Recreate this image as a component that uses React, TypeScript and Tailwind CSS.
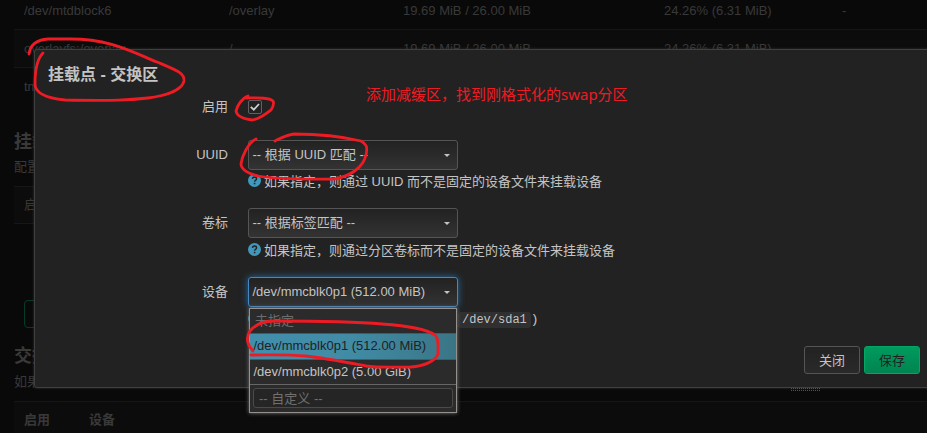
import type { ReactNode } from 'react';

function UsageRow({ cells, alt }: { cells: string[]; alt?: boolean }) {
  return (
    <div
      className={
        'grid h-[38px] shrink-0 grid-cols-[205px_174px_261px_178px_80px] items-center border-b border-[#161616] pl-[10px] whitespace-nowrap ' +
        (alt ? 'bg-[#0c0c0c]' : '')
      }
    >
      {cells.map((c, i) => (
        <span key={i}>{c}</span>
      ))}
    </div>
  );
}

function Background() {
  return (
    <div className="flex h-full flex-col pl-[14px] text-[#393939]">
      <div className="-mt-[8px] flex shrink-0 flex-col">
        <UsageRow cells={['/dev/mtdblock6', '/overlay', '19.69 MiB / 26.00 MiB', '24.26% (6.31 MiB)', '-']} />
        <UsageRow alt cells={['overlayfs:/overlay', '/', '19.69 MiB / 26.00 MiB', '24.26% (6.31 MiB)', '-']} />
        <div className="flex h-[38px] items-center pl-[10px]">tmpfs</div>
      </div>
      <h3 className="mt-[22px] h-[28px] shrink-0 text-[18px] leading-[28px] font-bold">挂载点</h3>
      <p className="mt-[1px] h-[20px] shrink-0 leading-[20px]">配置存储设备</p>
      <div className="mt-[9px] flex h-[38px] shrink-0 items-center border-y border-[#161616] bg-[#0c0c0c] pl-[10px]">启用</div>
      <div className="mt-[76px] ml-[10px] h-[28px] w-[60px] shrink-0 rounded-[4px] border border-[#033d2a]" />
      <h3 className="mt-[14px] h-[28px] shrink-0 text-[18px] leading-[28px] font-bold">交换区</h3>
      <p className="mt-[2px] h-[20px] shrink-0 leading-[20px]">如果物理</p>
      <div className="mt-[9px] flex h-[36px] shrink-0 items-center gap-[39px] border-t border-[#161616] bg-[#0c0c0c] pl-[10px] font-bold">
        <span>启用</span>
        <span>设备</span>
      </div>
    </div>
  );
}

function Select({ children, focused }: { children: ReactNode; focused?: boolean }) {
  return (
    <div
      className={
        'flex h-[30px] w-[210px] items-center justify-between rounded-[3px] border bg-gradient-to-b from-[#222] to-[#333] pr-[7px] pl-[3.5px] whitespace-nowrap ' +
        (focused ? 'border-[#4388c4] shadow-[0_0_7px_#286ca3]' : 'border-[#555]')
      }
    >
      <span>{children}</span>
      <span className="h-0 w-0 border-x-[3px] border-t-[3px] border-x-transparent border-t-[#c4c4c4]" />
    </div>
  );
}

function HelpIcon() {
  return (
    <svg width="13" height="13" viewBox="0 0 13 13" className="mt-[-4px] shrink-0">
      <circle cx="6.5" cy="6.5" r="6.5" fill="#4099bd" />
      <path d="M4.5 4.9 Q4.6 3.1 6.5 3.1 Q8.5 3.1 8.5 4.8 Q8.5 5.7 7.5 6.3 Q6.6 6.8 6.6 7.8" fill="none" stroke="#222" strokeWidth="1.5" />
      <rect x="5.8" y="8.8" width="1.6" height="1.5" fill="#222" />
    </svg>
  );
}

function Field({ label, children, className }: { label: string; children: ReactNode; className: string }) {
  return (
    <div className={'flex shrink-0 gap-[20px] ' + className}>
      <label className="h-[30px] w-[193px] shrink-0 text-right leading-[29px]">{label}</label>
      <div className="flex flex-col">{children}</div>
    </div>
  );
}

function Hint({ children }: { children: ReactNode }) {
  return (
    <div className="mt-[2px] flex h-[20px] items-center gap-[3px] whitespace-nowrap">
      <HelpIcon />
      <span className="leading-[20px]">{children}</span>
    </div>
  );
}

function Menu() {
  return (
    <div className="absolute top-[308px] left-[249px] flex h-[105px] w-[208px] flex-col border border-[#96918c] bg-[#2b2b2b] whitespace-nowrap text-[#c4c4c4] shadow-[0_0_4px_#777]">
      <div className="h-[25px] border-b border-[#555] pl-[5px] leading-[23px] text-[#6d6d6d]">未指定</div>
      <div className="h-[26px] border-b border-[#555] bg-gradient-to-r from-[#418fac] via-[#418ba5] to-[#3a7585] pl-[3.5px] leading-[24px] text-[#222]">
        /dev/mmcblk0p1 (512.00 MiB)
      </div>
      <div className="h-[25px] border-b border-[#666] pl-[3.5px] leading-[24px]">/dev/mmcblk0p2 (5.00 GiB)</div>
      <div className="mx-[3px] mt-[3px] h-[20px] rounded-[3px] border border-[#4a4a4a] bg-[#252525] pl-[5px] leading-[19px] text-[#707070]">-- 自定义 --</div>
    </div>
  );
}

function Modal() {
  return (
    <div className="absolute top-[49px] left-[34px] flex h-[339px] w-[900px] flex-col rounded-[3px] border border-[#404040] bg-[#222] text-[#c4c4c4] shadow-[0_0_3px_#333]">
      <h4 className="mt-[13px] ml-[13px] h-[24px] shrink-0 text-[16px] leading-[24px] font-bold">挂载点 - 交换区</h4>
      <Field label="启用" className="mt-[5px] h-[48px]">
        <div className="mt-[8px] flex h-[14px] w-[14px] items-center justify-center rounded-[2px] border border-[#606060]">
          <svg width="10" height="8" viewBox="0 0 10 8">
            <path d="M.8 3.8 3.8 6.7 9 1" fill="none" stroke="#d0d0d0" strokeWidth="1.8" />
          </svg>
        </div>
      </Field>
      <Field label="UUID" className="h-[68px]">
        <Select>-- 根据 UUID 匹配 --</Select>
        <Hint>如果指定，则通过 UUID 而不是固定的设备文件来挂载设备</Hint>
      </Field>
      <Field label="卷标" className="h-[69px]">
        <Select>-- 根据标签匹配 --</Select>
        <div className="mt-px">
          <Hint>如果指定，则通过分区卷标而不是固定的设备文件来挂载设备</Hint>
        </div>
      </Field>
      <Field label="设备" className="h-[69px]">
        <Select focused>/dev/mmcblk0p1 (512.00 MiB)</Select>
        <div className="mt-[3px] flex h-[20px] items-center whitespace-nowrap">
          <HelpIcon />
          <span className="w-[197px] pt-[6px] text-right">.</span>
          <code className="h-[16px] rounded-[3px] bg-[#303030] px-[4px] font-['Liberation_Mono'] text-[12px] leading-[17px]">/dev/sda1</code>
          <span className="font-['Liberation_Mono']">)</span>
        </div>
      </Field>
      <div className="mr-[13px] flex justify-end gap-[4px]">
        <button className="h-[28px] w-[56px] rounded-[3px] border border-[#555] bg-gradient-to-b from-[#222] to-[#2a2a2a] leading-[25px]">关闭</button>
        <button className="h-[28px] w-[56px] rounded-[3px] border border-[#00a766] bg-gradient-to-b from-[#009a5d] to-[#008550] leading-[25px] text-[#222]">保存</button>
      </div>
    </div>
  );
}

function Marks() {
  return (
    <svg className="pointer-events-none absolute inset-0" width="927" height="433" viewBox="0 0 927 433" fill="none" stroke="#ed1c24" strokeWidth="2.8" strokeLinecap="round" strokeLinejoin="round">
      <path d="M29 54C30 46 36 40 48 39L70 39C110 39 130 51 157 62C176 70 185 73 184 81C182 91 163 96 148 98C130 100 115 101 65 100C45 98 35 93 35 84C35 72 36 60 43 53" />
      <path d="M248 96C242 98 237 106 236 111C237 116 244 119 252 120C260 119 266 114 271 110C273 107 274 103 273 101C268 97 257 98 246 98" />
      <path d="M256 139C248 143 242 156 241 164C241 169 248 174 258 176C280 180 315 179 335 179C350 176 363 168 366 155C368 146 366 144 361 141C340 136 320 134 294 134C286 135 281 138 275 141" />
      <path d="M253 351C248 346 245 338 250 331C255 325 262 321 274 321C310 321 360 322 382 324C410 326 428 330 435 335C439 338 438 346 438 354C435 362 423 366 411 367C395 367 380 368 366 366C345 362 325 358 305 356C285 354 270 355 251 355" />
    </svg>
  );
}

export default function App() {
  return (
    <div className="relative h-[433px] w-[927px] overflow-hidden bg-[#090909] font-['Liberation_Sans','Noto_Sans_CJK_SC',sans-serif] text-[13px]">
      <Background />
      <Modal />
      <Menu />
      <div className="absolute top-[388px] left-[791px] h-[3px] w-[30px]">
        <div className="h-px bg-[repeating-linear-gradient(90deg,#555_0_1px,transparent_1px_2px)]" />
        <div className="mt-px h-px bg-[repeating-linear-gradient(90deg,#555_0_1px,transparent_1px_2px)]" />
      </div>
      <p className="absolute top-[83px] left-[366px] font-['Noto_Sans','Noto_Sans_CJK_SC',sans-serif] text-[15px] leading-[22px] whitespace-nowrap text-[#ed1c24]">
        添加减缓区，找到刚格式化的swap分区
      </p>
      <Marks />
    </div>
  );
}
